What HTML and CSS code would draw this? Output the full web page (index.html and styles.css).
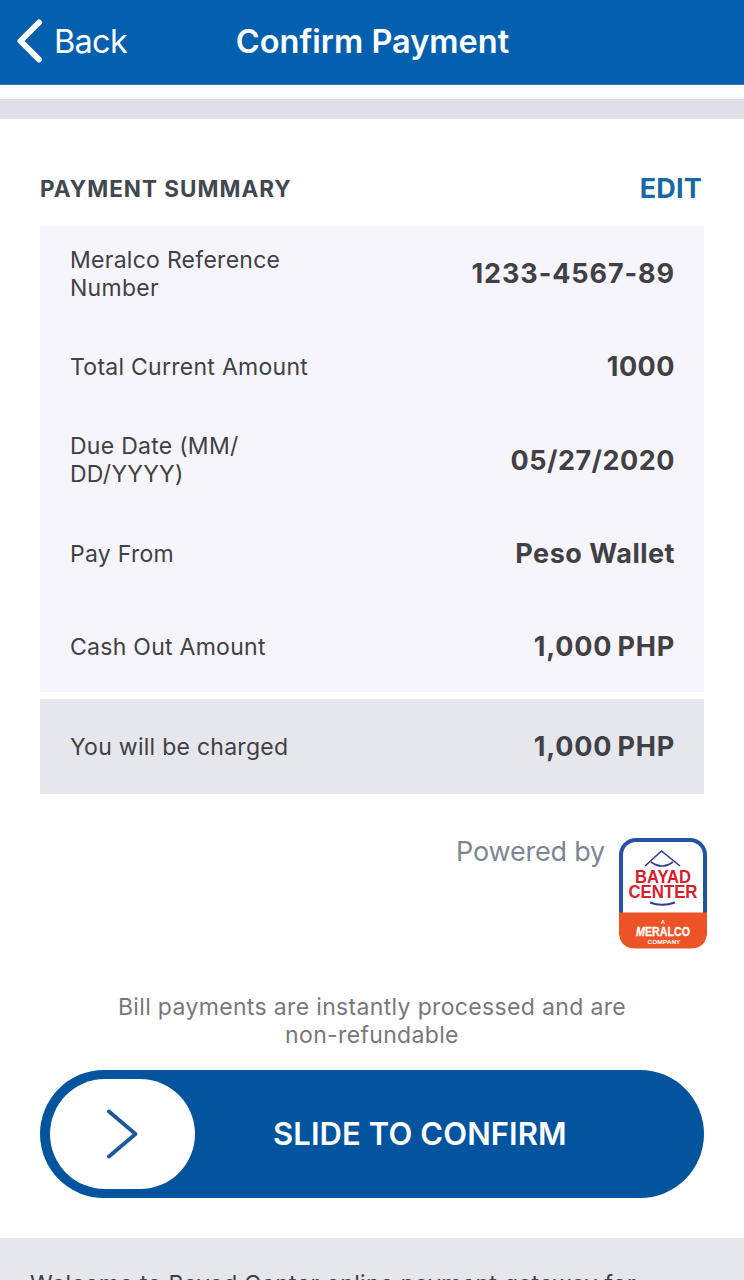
FILE: index.html
```html
<!DOCTYPE html>
<html lang="en">
<head>
    <meta charset="UTF-8">
    <meta name="viewport" content="width=device-width, initial-scale=1.0">
    <title>Confirm Payment</title>
    <link rel="stylesheet" href="styles.css">
</head>
<body>
    <header class="navbar">
        <a class="back" href="#">
            <svg class="back-icon" width="28" height="44" viewBox="0 0 28 44">
                <path d="M22 3.5 L3.5 22 L22 40.5" />
            </svg>
            <span>Back</span>
        </a>
        <h1>Confirm Payment</h1>
    </header>
    <div class="divider"></div>

    <main>
        <div class="summary-header">
            <h2>PAYMENT SUMMARY</h2>
            <a class="edit" href="#">EDIT</a>
        </div>

        <!-- Payment details -->
        <div class="summary">
            <div class="row">
                <span class="label">Meralco Reference<br>Number</span>
                <span class="value reference">1233-4567-89</span>
            </div>
            <div class="row">
                <span class="label">Total Current Amount</span>
                <span class="value">1000</span>
            </div>
            <div class="row">
                <span class="label">Due Date (MM/<br>DD/YYYY)</span>
                <span class="value">05/27/2020</span>
            </div>
            <div class="row">
                <span class="label">Pay From</span>
                <span class="value">Peso Wallet</span>
            </div>
            <div class="row">
                <span class="label">Cash Out Amount</span>
                <span class="value amount">1,000 PHP</span>
            </div>
        </div>
        <div class="row total">
            <span class="label">You will be charged</span>
            <span class="value amount">1,000 PHP</span>
        </div>

        <div class="powered">
            <span>Powered by</span>
            <svg class="logo" width="90" height="112" viewBox="0 0 90 112">
                <rect x="3" y="3" width="84" height="106" rx="15" fill="#fff" stroke="#2453a4" stroke-width="4" />
                <path d="M1 75.5 H89 V94 Q89 111.5 72 111.5 H18 Q1 111.5 1 94 Z" fill="#ec5326" />
                <path d="M27 29 L43.5 14 L62 29 M33 25 Q44 33 55 25" fill="none" stroke="#343b91" stroke-width="1.6" />
                <path d="M32 65.5 Q44 70 57 65.5" fill="none" stroke="#343b91" stroke-width="2" />
                <text class="logo-name" x="45" y="45.5" textLength="56" lengthAdjust="spacingAndGlyphs">BAYAD</text>
                <text class="logo-name" x="45" y="60.5" textLength="69" lengthAdjust="spacingAndGlyphs">CENTER</text>
                <text class="logo-small" x="45" y="87">A</text>
                <text class="logo-meralco" x="45" y="98.5" textLength="54" lengthAdjust="spacingAndGlyphs"><tspan class="slanted">M</tspan>ERALCO</text>
                <text class="logo-small" x="46" y="106.5" textLength="33" lengthAdjust="spacingAndGlyphs">COMPANY</text>
            </svg>
        </div>

        <p class="notice">Bill payments are instantly processed and are<br>non-refundable</p>

        <div class="slider">
            <div class="handle">
                <svg width="32" height="50" viewBox="0 0 32 50">
                    <path d="M2 2.5 L28.5 25 L2 47.5" />
                </svg>
            </div>
            <span class="slider-text">SLIDE TO CONFIRM</span>
        </div>
    </main>

    <footer>Welcome to Bayad Center online payment gateway for</footer>
</body>
</html>
```
FILE: styles.css
```css
* {
    box-sizing: border-box;
}

body {
    margin: 0;
    height: 1280px;
    overflow: hidden;
    font-family: Inter, 'Liberation Sans', sans-serif;
    background: #fff;
    color: #414045;
}

h1, h2, p {
    margin: 0;
}

a {
    text-decoration: none;
}

.navbar {
    display: grid;
    grid-template-columns: 220px 1fr 219px;
    align-items: center;
    height: 85px;
    padding-bottom: 2px;
    background: #0360ae;
    border-bottom: 1px solid #3a6fb0;
    color: #fff;
}

.back {
    display: flex;
    align-items: center;
    padding-left: 17px;
    font-size: 32.5px;
    letter-spacing: -0.7px;
    color: #fff;
}

.back span {
    margin-left: 9px;
}

.back-icon path {
    fill: none;
    stroke: #fff;
    stroke-width: 6;
    stroke-linecap: round;
    stroke-linejoin: round;
}

.navbar h1 {
    font-size: 32.5px;
    font-weight: 600;
    text-align: center;
    white-space: nowrap;
}

.divider {
    height: 20px;
    margin-top: 14px;
    background: #dfe0e7;
}

main {
    padding: 0 40px;
}

.summary-header {
    display: flex;
    justify-content: space-between;
    align-items: center;
    height: 107px;
    padding: 31px 2px 0 0;
}

.summary-header h2 {
    font-size: 22.5px;
    font-weight: 700;
    letter-spacing: 1px;
    color: #434750;
}

.edit {
    font-size: 27px;
    font-weight: 700;
    letter-spacing: 0.2px;
    color: #1768a3;
}

.summary {
    background: #f5f5fb;
}

.row {
    display: flex;
    justify-content: space-between;
    align-items: center;
    height: 93.3px;
    padding: 1px 29px 0 30px;
}

.label {
    padding-top: 1px;
    font-size: 23px;
    line-height: 28px;
    letter-spacing: 0.27px;
}

.value {
    padding-top: 1px;
    font-size: 27px;
    font-weight: 700;
    letter-spacing: 0.5px;
}

.reference {
    letter-spacing: 0.9px;
}

.amount {
    letter-spacing: 0.8px;
    word-spacing: -2px;
}

.total {
    height: 95px;
    margin-top: 6.5px;
    background: #e6e7ec;
}

.total .label, .total .value {
    padding-top: 0;
}

.powered {
    display: flex;
    justify-content: flex-end;
    margin: 43px -4px 0 0;
    font-size: 27px;
    line-height: 30px;
    letter-spacing: -0.2px;
    color: #7c8794;
}

.logo {
    margin-left: 13px;
    letter-spacing: 0;
}

.logo text {
    font-family: 'Liberation Sans', sans-serif;
    font-weight: bold;
    text-anchor: middle;
}

.logo .logo-name {
    font-size: 18px;
    fill: #d5202f;
}

.logo .logo-small {
    font-size: 6px;
    fill: #fff;
}

.logo .logo-meralco {
    font-size: 12px;
    fill: #fff;
    stroke: #fff;
    stroke-width: 0.3;
}

.slanted {
    font-style: italic;
}

.notice {
    margin-top: 44.5px;
    font-size: 23px;
    line-height: 28px;
    letter-spacing: 0.34px;
    text-align: center;
    color: #78787c;
}

.slider {
    display: flex;
    align-items: center;
    height: 128px;
    margin-top: 21px;
    padding: 0 0 1px 10px;
    border-radius: 64px;
    background: #03549e;
}

.handle {
    display: flex;
    align-items: center;
    justify-content: center;
    width: 145px;
    height: 110px;
    border-radius: 55px;
    background: #fff;
}

.handle path {
    fill: none;
    stroke: #1d579c;
    stroke-width: 3.8;
    stroke-linecap: round;
    stroke-linejoin: round;
}

.slider-text {
    margin-left: 78px;
    font-size: 31px;
    font-weight: 600;
    letter-spacing: 0.1px;
    color: #fff;
}

footer {
    margin-top: 40px;
    height: 100px;
    padding: 32px 30px 0;
    background: #e6e7ec;
    font-size: 23px;
    line-height: 28px;
    letter-spacing: 0.32px;
    white-space: nowrap;
}
```
